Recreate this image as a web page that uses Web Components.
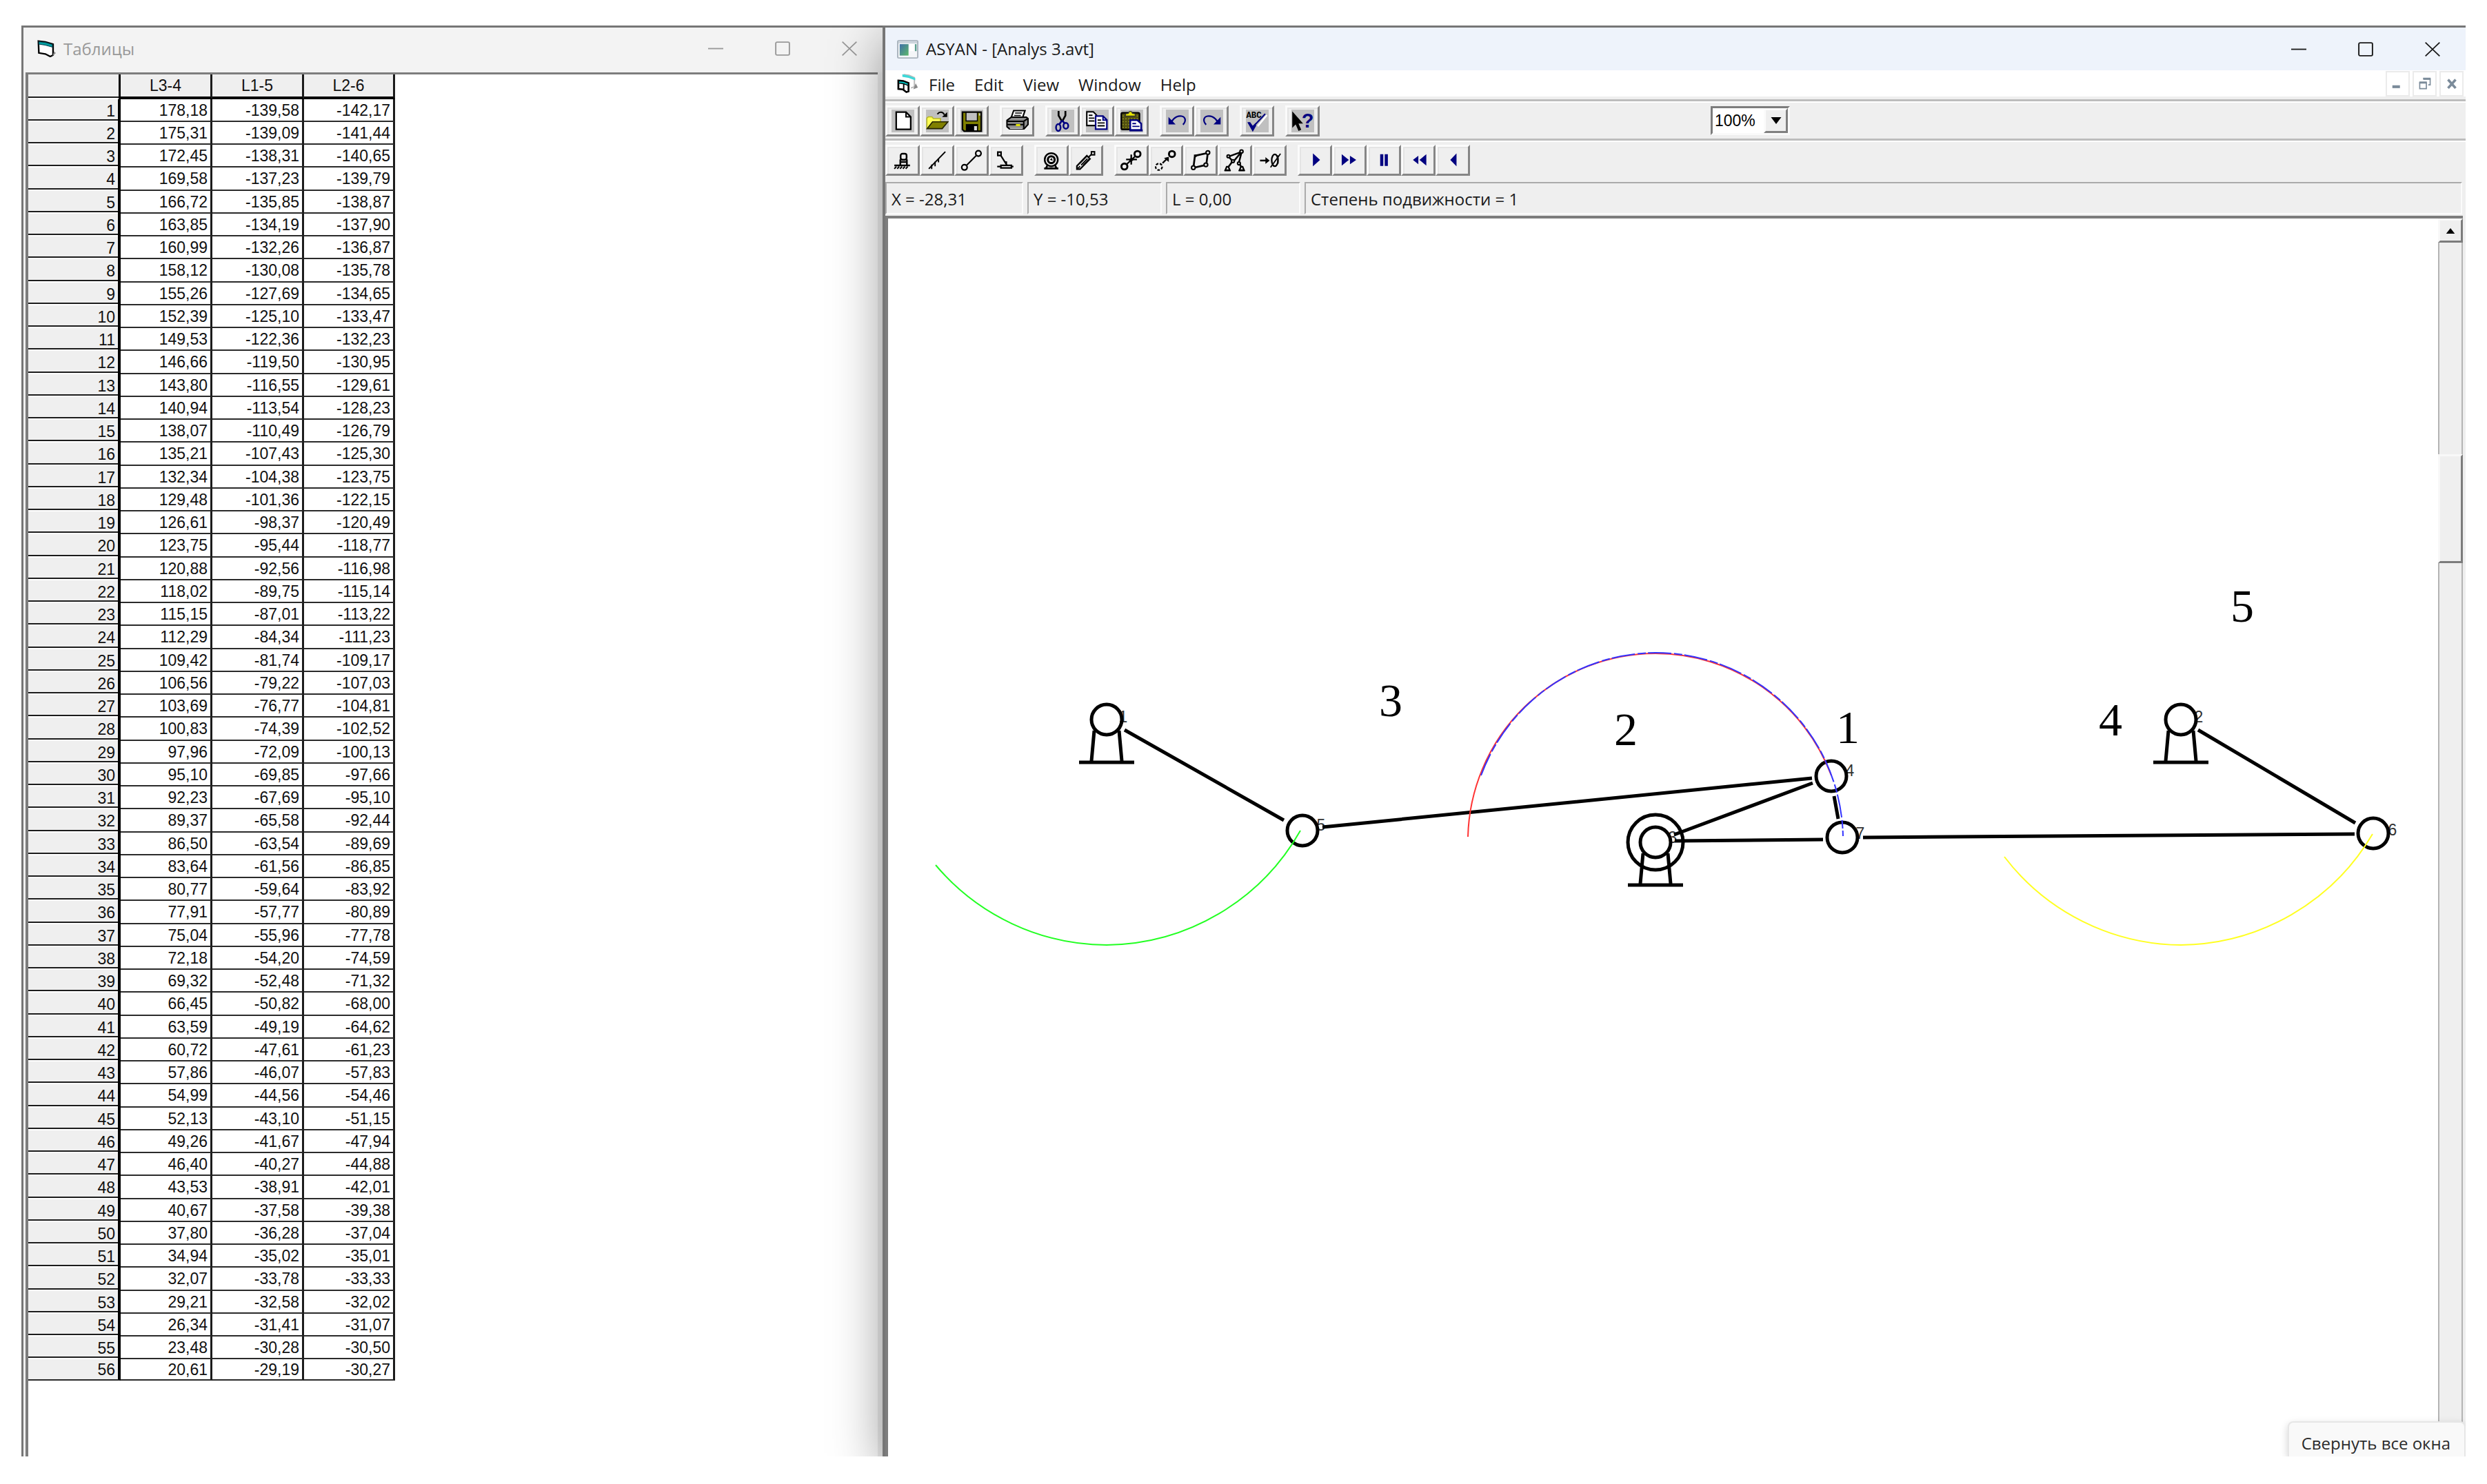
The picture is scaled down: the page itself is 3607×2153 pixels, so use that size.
<!DOCTYPE html>
<html lang="ru">
<head>
<meta charset="utf-8">
<title>ASYAN - [Analys 3.avt]</title>
<style>
  html, body { margin: 0; height: 100%; background: #fff; }
  body { font: 24px/32px "Open Sans", "Noto Sans", sans-serif; color: #1a1a1a; }
</style>
</head>
<body>
<asyan-desktop></asyan-desktop>

<script>
const sheet = `*{box-sizing:border-box} button{font:inherit;color:inherit;margin:0;padding:0;border:0;background:none}`;

function define(name, render) {
  customElements.define(name, class extends HTMLElement {
    connectedCallback() {
      if (this.shadowRoot) return;
      const root = this.attachShadow({ mode: 'open' });
      const t = document.createElement('template');
      t.innerHTML = render(this).replace('<style>', '<style>' + sheet);
      root.appendChild(t.content.cloneNode(true));
    }
  });
}

/* ---------- icon set, drawn on a 16 x 16 grid ---------- */
const K = '#000', N = '#000080', O = '#808000', Y = '#ffff55';
const ground = (x, y) => `<path d="M${x - 1.6} ${y + 2.6}l1-2.4h1.2l1 2.4zM${x - 2.2} ${y + 2.8}h4.4" fill="none" stroke="${K}" stroke-width="1.1"/>`;
const ICONS = {
  'new': `<path d="M3.3 1.8h6.9l3.3 3.3v8.8H3.3z" fill="#fff" stroke="${K}" stroke-width="1.1"/><path d="M10.2 1.8v3.3h3.3" fill="none" stroke="${K}"/>`,
  open: `<path d="M.6 13.4V6l1-.9h2.6l1 1.2h5v2.4" fill="${Y}" stroke="#b5b52a" stroke-width=".8"/><path d="M.8 13.4L4.6 8.6h10.8l-4 4.8z" fill="${O}" stroke="#222200" stroke-width=".8"/><path d="M8 3.2C9.4 1.4 11.6 1.2 13 3.6" fill="none" stroke="${K}"/><path d="M14.9 1.8v3.4h-3.6z"/>`,
  save: `<path d="M1.4 1.8h13.2v13.4H2.6L1.4 14z" fill="${O}" stroke="${K}" stroke-width="1.1"/><path d="M3.9 2h8v6h-8z" fill="#c0c0c0" stroke="${K}" stroke-width=".7"/><path d="M3.8 10.2h8.6v5H3.8z"/><path d="M9.6 11.6h2v3h-2z" fill="#ddd"/><path d="M13 2.6h1v1.6h-1z" fill="#c0c0c0"/>`,
  print: `<path d="M5.4.7h8l-1.8 5.2h-8z" fill="#fff" stroke="${K}"/><path d="M6.4 2.4h4.8M5.8 4.1h4.6" stroke="${K}" stroke-width=".8"/><path d="M.7 7.6l3-2.3h10.6l1.2 1v4.2l-2.8 3H2.4L.7 12z" fill="#8d8d8d" stroke="${K}"/><path d="M.7 8.2h11.8l3-2M12.5 8.2v4.8M1 10.5h11.4" stroke="${K}" fill="none"/><path d="M7 10.2h3v1.4H7z" fill="#e6e600"/><path d="M2.8 13.2h9" stroke="#ddd" stroke-width=".7"/>`,
  cut: `<path d="M5 1v3.2l2.3 4M9.8 1v3.2L7.6 8.2" fill="none" stroke="${K}" stroke-width="1.3"/><path d="M7.4 7.6l-2 3M7.5 7.6l2 2.4" stroke="${N}" stroke-width="1.3"/><ellipse cx="4.8" cy="12.6" rx="1.6" ry="2.4" fill="none" stroke="${N}" stroke-width="1.2"/><ellipse cx="10.1" cy="11.4" rx="1.7" ry="2.1" fill="none" stroke="${N}" stroke-width="1.2"/>`,
  copy: `<path d="M.6 1.6h4.6l2.2 2.2v7.4H.6z" fill="#fff" stroke="${K}"/><path d="M2 4h2.6M2 6h4M2 8h4" stroke="${K}" stroke-width=".9"/><path d="M6.8 4.6h5.2l2.7 2.7v6.5H6.8z" fill="#fff" stroke="${N}" stroke-width="1.1"/><path d="M12 4.8v2.6h2.6" fill="none" stroke="${N}"/><path d="M8.2 7.4h2.4M8.2 9.4h5M8.2 11.4h5" stroke="${K}" stroke-width=".9"/>`,
  paste: `<rect x=".6" y="2.2" width="12.8" height="11.8" rx="1" fill="#504f10" stroke="${K}" stroke-width="1.1"/><path d="M1.4 4.5h11M1.4 6.5h11M1.4 8.5h11M1.4 10.5h11M1.4 12.5h11" stroke="#8a8a20" stroke-width=".8" stroke-dasharray="1 1"/><path d="M3.6 4.6V3l2-.4c.4-1.8 2.4-1.8 2.8 0l2 .4v1.6z" fill="#e8e800" stroke="#333" stroke-width=".6"/><path d="M6.9 7.4h5l2.7 2.4v4.6H6.9z" fill="#fff" stroke="${N}" stroke-width="1.2"/><path d="M8.4 9.8h2.6M8.4 11.8h5" stroke="${N}" stroke-width=".9"/><path d="M6.4 14.6h9.2" stroke="${N}" stroke-width="1.4"/>`,
  undo: `<path d="M1.8 5.2v5.2h5z" fill="${N}"/><path d="M4 8.4C6 5 9 4.2 11 4.6c3 .6 3.3 3.6 1 6" fill="none" stroke="${N}" stroke-width="1.1"/>`,
  redo: `<path d="M14.2 5.2v5.2h-5z" fill="${N}"/><path d="M12 8.4C10 5 7 4.2 5 4.6c-3 .6-3.3 3.6-1 6" fill="none" stroke="${N}" stroke-width="1.1"/>`,
  spell: `<text x=".2" y="6" font-family="Liberation Mono, monospace" font-weight="bold" font-size="6">ABC</text><path d="M14.7 3.9L8.3 11.7" stroke="#fff" stroke-width="1.2"/><path d="M1.8 9.2l3 3.2L13.6 3" fill="none" stroke="${N}" stroke-width="1"/><path d="M1 8.8h2l1.8 2.6L7 9.2l.2 2.2-2.4 4.2z" fill="${N}"/>`,
  help: `<path d="M.6 1.2v11.6l2.4-2.4 2 4.6 1.9-.8-1.9-4.4h3.2z"/><text x="7.2" y="12.6" font-family="Liberation Sans, sans-serif" font-weight="bold" font-size="14" fill="${N}">?</text>`,
  pivot: `<rect x="6.4" y="3.4" width="4.2" height="4.2" rx="1.3" fill="none" stroke="${K}" stroke-width="1.2"/><path d="M6.2 7.4v4.2M10.8 7.4v4.2M6.4 9.2h4.2M2 11.6h11" stroke="${K}" stroke-width="1.2"/><path d="M2 14l1.4-1.6M4 14l1.4-1.6M6 14l1.4-1.6M8 14l1.4-1.6M10 14l1.4-1.6" stroke="${K}"/>`,
  rail: `<path d="M13.6 2L2 14" stroke="${K}" stroke-width="1"/><path d="M4 11v3.2M6.4 9v3.2M8.8 6.8v2.6" stroke="${K}" stroke-width=".9"/>`,
  link: `<circle cx="12.6" cy="3.2" r="1.9" fill="none" stroke="${K}" stroke-width="1.1"/><circle cx="2.8" cy="13" r="1.9" fill="none" stroke="${K}" stroke-width="1.1"/><path d="M11.2 4.6l-7 7" stroke="${K}"/>`,
  slider: `<path d="M2 2.2h2.3v2.5H2zM4.2 11.6h7.4v1.8H4.2zM4.2 4.8l4.2 6.6M1.6 12.4h2.6M11.6 12.4h1.4" fill="none" stroke="${K}" stroke-width="1.1"/><path d="M6 8.6l2.6.2-.2 2.4z"/>`,
  motor: `<circle cx="7.6" cy="7.6" r="4.6" fill="none" stroke="${K}" stroke-width="1.2"/><circle cx="7.6" cy="7.6" r="2.4" fill="none" stroke="${K}" stroke-width="1.5"/><path d="M6.6 7.6l1.4-1.2.6 2z"/><path d="M5 11.4l-1.2 2.4M10.2 11.4l1.2 2.4M2.6 13.8h10" stroke="${K}" stroke-width="1.3"/>`,
  cylinder: `<path d="M1.4 12l7-7.2 2.2 2.2-7 7.2H1.4z" fill="none" stroke="${K}" stroke-width="1.1"/><path d="M4.4 11.4l4.4-4.6M3.6 10l4.8-5M6 11.4l4-4.2M2.2 13.6l1.4-1.4" stroke="${K}" stroke-width=".9"/><path d="M9.4 6l2.4-2.4" stroke="${K}"/><rect x="11.6" y="2" width="2.2" height="2.2" fill="none" stroke="${K}"/>`,
  join: `<circle cx="12" cy="3.6" r="2.1" fill="none" stroke="${K}" stroke-width="1.4"/><circle cx="2.8" cy="12.4" r="2.1" fill="none" stroke="${K}" stroke-width="1.4"/><path d="M4.4 10.8l6-5.6M7.6 4v7M4 7.4h7.6" stroke="${K}" stroke-width="1.1"/><path d="M7.6 6.2l1.8 1.4-1.8 1.6-1.8-1.6z"/>`,
  move: `<circle cx="12" cy="3.6" r="2.1" fill="none" stroke="${K}" stroke-width="1.4"/><circle cx="2.8" cy="12.6" r="2.3" fill="none" stroke="${K}" stroke-width="1.1" stroke-dasharray="1.8 1"/><path d="M5.4 10l3-3" stroke="${K}" stroke-width="1.1"/><path d="M9.8 5.6v3.6L6.4 6.4z"/>`,
  contour: `<path d="M4.2 4.8l8-1.8M12.8 4l-.8 6.4M10.4 11.6l-6 1.4M3 12l.8-6.4" stroke="${K}" stroke-width="1.3"/><path d="M3.2 4h1.8v1.8H3.2z"/><circle cx="13" cy="2.6" r="1.3" fill="#efefef" stroke="${K}"/><circle cx="11.6" cy="11.2" r="1.3" fill="#efefef" stroke="${K}"/><circle cx="2.8" cy="13.2" r="1.3" fill="#efefef" stroke="${K}"/>`,
  assembly: `<path d="M3.4 5.4l8.6-3.2M3.8 6l2.4 2.6L3 13M12 2.6l-5 6M12.4 2.6l-1.8 7L12.4 13" fill="none" stroke="${K}" stroke-width="1.2"/><circle cx="12.4" cy="1.8" r="1.1" fill="#efefef" stroke="${K}"/><circle cx="3.2" cy="5.2" r="1" fill="#efefef" stroke="${K}"/><circle cx="6.4" cy="8.6" r="1" fill="#efefef" stroke="${K}"/><circle cx="10.6" cy="10.2" r="1" fill="#efefef" stroke="${K}"/>${ground(2.6, 12.4)}${ground(12.6, 12.4)}`,
  zero: `<path d="M1.2 8.2h4.6" stroke="${K}" stroke-width="1.2"/><path d="M5 5.8l3 2.4-3 2.4z"/><ellipse cx="11.6" cy="8" rx="2.2" ry="4.2" fill="none" stroke="${K}" stroke-width="1.1"/><path d="M15.6 3.4L8.6 13M13.8 4.6v5.8" stroke="${K}" stroke-width=".9"/>`,
  play: `<path d="M6.4 3.2L11.4 7.7 6.4 12.2z" fill="${N}"/>`,
  forward: `<path d="M2.4 3.8L7.4 7.8 2.4 11.8zM8.2 4.8l4.4 3-4.4 3z" fill="${N}"/>`,
  pause: `<path d="M5.2 3.8h2.2v8.2H5.2zM8.4 3.8h2.2v8.2H8.4z" fill="${N}"/>`,
  rewind: `<path d="M7.8 4.8L4 7.8l3.8 3zM13.4 3.8l-4.8 4 4.8 4z" fill="${N}"/>`,
  back: `<path d="M10.4 3.2L6 7.7l4.4 4.5z" fill="${N}"/>`,
  min: `<path d="M0 8h16" stroke="currentColor" stroke-width="1.4"/>`,
  max: `<rect x=".8" y=".8" width="14.4" height="14.4" rx="1.4" fill="none" stroke="currentColor" stroke-width="1.4"/>`,
  close: `<path d="M.5.5l15 15M15.5.5l-15 15" stroke="currentColor" stroke-width="1.3"/>`,
  mdimin: `<path d="M2 10h8v3H2z" fill="currentColor"/>`,
  mdirestore: `<path d="M6.5 3.5h7v6h-2" fill="none" stroke="currentColor" stroke-width="1.2"/><path d="M6 3h8" stroke="currentColor" stroke-width="2"/><path d="M2.5 7.5h7v6h-7z" fill="none" stroke="currentColor" stroke-width="1.2"/><path d="M2 7h8" stroke="currentColor" stroke-width="2"/>`,
  mdiclose: `<path d="M4 4l8 9M12 4l-8 9" stroke="currentColor" stroke-width="2.6"/>`,
  form: `<path d="M1 1l6 .8 6.6 2V14l-2.4 1.4L7 13l-5.6-1z" fill="#fff" stroke="${K}" stroke-width="1.4"/><path d="M1.4 1.6l6 .8 5.6 1.8v2.4L7 4.8l-5.6-1z" fill="#00a0a0" stroke="#045" stroke-width=".7"/><path d="M14.4 10.6l1.6 1.6-2.8 2.6" fill="#888"/>`,
  forms: `<path d="M5 .6l4 .6 4 2v7.6l-2.6 1" fill="#fff" stroke="#bbb"/><path d="M4 .4l4.6 1 5 2.2v1.8L8.6 3.4 4 2.6z" fill="#3fd8d8"/><path d="M14 8l1.6 3.4-3.4 1.4" fill="#888"/><path d="M1 5.6l3.6.4 4 1.6v7L7 15.2 4.4 13 1 12.6z" fill="#fff" stroke="${K}" stroke-width="1.4"/><path d="M1.2 6l3.8.4 3.4 1.4v2L5 8.4l-3.8-.6z" fill="#00c0c0" stroke="${K}" stroke-width=".7"/><path d="M5 8v5" stroke="${K}"/>`,
  app: `<rect x=".5" y=".5" width="15" height="15" rx="1" fill="#f4f6f8" stroke="#a9b3bd"/><path d="M1 1h14v2H1z" fill="#ccd4dc"/><defs><linearGradient id="g" x1="0" y1="0" x2="1" y2="1"><stop offset="0" stop-color="#3f6fa8"/><stop offset="1" stop-color="#5cb86a"/></linearGradient></defs><path d="M2 3.6h6.6v9.8H2z" fill="url(#g)"/><path d="M9.4 3.6h3.2v6H9.4z" fill="#fff"/><path d="M13.4 3.6h1.2v6h-1.2z" fill="#5b9f8f"/>`,
  up: `<path d="M8 4l5 8H3z"/>`,
  down: `<path d="M2 3h12l-6 10z"/>`
};

define('vb-icon', el => `
  <style>:host{display:block;width:33px;height:33px;flex:none} svg{display:block;width:100%;height:100%}</style>
  <svg viewBox="0 0 16 16" preserveAspectRatio="none" aria-hidden="true">${ICONS[el.getAttribute('name')]}</svg>`);

define('tool-button', el => `
  <style>
    :host{display:block;flex:none}
    button{display:flex;align-items:center;justify-content:center;width:50px;height:45px;background:#efefef;
      border:3px solid;border-color:#fbfbfb #868686 #868686 #fbfbfb;box-shadow:inset 2px 2px #e4e4e4}
    :host([well]) vb-icon{background:#c0c0c0}
  </style>
  <button aria-label="${el.getAttribute('label')}"><vb-icon name="${el.getAttribute('icon')}"></vb-icon></button>`);

define('tool-group', () => `<style>:host{display:flex;flex:none}</style><slot></slot>`);

define('tool-bar', () => `
  <style>:host{display:flex;gap:16px;padding:6px 0 3px;background:#efefef;border-top:3px solid #bdbdbd;box-shadow:inset 0 2px #fff}</style>
  <slot></slot>`);

define('zoom-box', () => `
  <style>
    :host{display:block;margin:1px 0 2px 551px}
    label{display:grid;width:115px;height:42px;background:#fff;border:3px solid;border-color:#7c7c7c #fafafa #fafafa #7c7c7c}
    select,span{grid-area:1/1}
    select{appearance:none;border:0;margin:0;padding:0 0 0 3px;background:none;font:23px/32px "Liberation Sans",sans-serif;color:#000}
    span{justify-self:end;display:flex;align-items:center;justify-content:center;width:35px;background:#efefef;
      border:3px solid;border-color:#fbfbfb #808080 #808080 #fbfbfb;pointer-events:none}
    vb-icon{width:20px;height:16px}
  </style>
  <label><select aria-label="Zoom"><option>100%</option></select><span><vb-icon name="down"></vb-icon></span></label>`);

define('title-bar', el => `
  <style>
    :host{display:flex;align-items:center;flex:none;height:62px;padding-left:17px;background:#eef3fb;color:#1a1a1a}
    :host([inactive]){height:65px;padding:0 0 4px 20px;background:#f3f3f3;color:#999}
    .ico{width:31px;height:27px;margin-right:11px}
    :host([inactive]) .ico{width:27px;height:25px}
    h1{flex:1;margin:0;font-size:24px;line-height:32px;font-weight:400}
    button{display:flex;align-items:center;justify-content:center;width:97px;height:60px}
    button vb-icon{width:22px;height:21px}
  </style>
  <vb-icon class="ico" name="${el.getAttribute('icon')}"></vb-icon>
  <h1><slot></slot></h1>
  <button aria-label="Minimize"><vb-icon name="min"></vb-icon></button>
  <button aria-label="Maximize"><vb-icon name="max"></vb-icon></button>
  <button aria-label="Close"><vb-icon name="close"></vb-icon></button>`);

define('menu-bar', () => `
  <style>
    :host{display:flex;align-items:center;flex:none;height:42px;padding:0 3px 0 17px;background:#fff;border-bottom:4px solid #efefef}
    .doc{width:31px;height:28px}
    nav{display:flex;flex:1;gap:28px;margin-left:15px;padding-top:4px}
    nav button{line-height:32px}
    .mdi{display:flex;gap:4px;color:#7b8b9a}
    .mdi button{display:flex;align-items:center;justify-content:center;width:35px;height:37px;border:2px solid #ebebeb}
    .mdi vb-icon{width:22px;height:22px}
  </style>
  <vb-icon class="doc" name="forms"></vb-icon>
  <nav><button>File</button><button>Edit</button><button>View</button><button>Window</button><button>Help</button></nav>
  <div class="mdi">
    <button aria-label="Minimize document"><vb-icon name="mdimin"></vb-icon></button>
    <button aria-label="Restore document"><vb-icon name="mdirestore"></vb-icon></button>
    <button aria-label="Close document"><vb-icon name="mdiclose"></vb-icon></button>
  </div>`);

define('status-bar', () => `
  <style>
    :host{display:grid;grid-template-columns:200px 195px 195px 1fr;gap:6px;flex:none;padding:6px 5px 2px 0;background:#efefef}
    ::slotted(span){box-sizing:border-box;height:47px;padding-left:7px;line-height:45px;border:2px solid;border-color:#ababab #fbfbfb #fbfbfb #ababab}
  </style><slot></slot>`);

define('scroll-bar', () => `
  <style>
    :host{display:flex;flex-direction:column;flex:none;width:36px}
    button,.thumb{background:#efefef;border:3px solid;border-color:#f8f8f8 #7c7c7c #7c7c7c #f8f8f8}
    button{display:flex;align-items:center;justify-content:center;height:35px}
    vb-icon{width:20px;height:16px}
    .track{flex:1;display:grid;grid-template-rows:307fr 158fr 1296fr}
    .track i{border:solid #b4b4b4;border-width:0 2px}
  </style>
  <button aria-label="Scroll up"><vb-icon name="up"></vb-icon></button>
  <div class="track"><i></i><div class="thumb"></div><i></i></div>`);

/* pinned support: joint circle on a stand */
const support = (x, y) => `<circle cx="${x}" cy="${y}" r="22"/><path d="M${x - 18} ${y + 16}L${x - 22} ${y + 60}M${x + 18} ${y + 16}L${x + 22} ${y + 60}M${x - 40} ${y + 62}h80"/>`;

define('mechanism-view', () => `
  <style>
    :host{display:block;flex:1;min-width:0;background:#fff}
    svg{display:block;width:100%;height:100%}
    .body{fill:none;stroke:#000;stroke-width:5}
    .path{fill:none;stroke-width:2}
    .mark{font:68px "Liberation Serif",serif;text-anchor:middle;fill:#000}
    .id{font:23px "Liberation Sans",sans-serif;text-anchor:middle;fill:#333}
  </style>
  <svg viewBox="1288 317 2248 1796" preserveAspectRatio="xMinYMin meet" role="img" aria-label="Mechanism">
    <g class="id">
      <text x="1629" y="1048">1</text><text x="3189" y="1048">2</text><text x="2426" y="1223">3</text>
      <text x="2683" y="1126">4</text><text x="1916" y="1205">5</text><text x="3470" y="1212">6</text><text x="2698" y="1217">7</text>
    </g>
    <g class="body">
      ${support(1605, 1044)}${support(3163, 1044)}${support(2401, 1222)}
      <circle cx="2401" cy="1222" r="40"/>
      <circle cx="1889" cy="1205" r="22"/><circle cx="2656" cy="1126" r="22"/>
      <circle cx="2672" cy="1215" r="22"/><circle cx="3442" cy="1209" r="22"/>
      <path d="M1631 1059L1862 1190M1918 1200L2628 1129M2428 1211L2629 1136M2429 1220L2644 1218M2660 1155L2666 1188M2702 1215L3415 1210M3188 1059L3416 1194"/>
    </g>
    <g class="path">
      <path d="M1357 1255A326 326 0 0 0 1605 1371A326 326 0 0 0 1886 1205" stroke="#2f2"/>
      <path d="M2907 1243A326 326 0 0 0 3163 1371A326 326 0 0 0 3441 1210" stroke="#ff2"/>
      <path d="M2129 1214A273 273 0 0 1 2401 948A273 273 0 0 1 2656 1125" stroke="#f33"/>
      <path d="M2148 1125A272 272 0 0 1 2401 947A272 272 0 0 1 2673 1213" stroke="#33f" stroke-dasharray="34 4 12 3"/>
    </g>
    <g class="mark">
      <text x="2680" y="1078">1</text><text x="2358" y="1081">2</text><text x="2017" y="1039">3</text>
      <text x="3061" y="1067">4</text><text x="3252" y="902">5</text>
    </g>
  </svg>`);

/* ---------- table of link angles ---------- */
const L34 = '178,18 175,31 172,45 169,58 166,72 163,85 160,99 158,12 155,26 152,39 149,53 146,66 143,80 140,94 138,07 135,21 132,34 129,48 126,61 123,75 120,88 118,02 115,15 112,29 109,42 106,56 103,69 100,83 97,96 95,10 92,23 89,37 86,50 83,64 80,77 77,91 75,04 72,18 69,32 66,45 63,59 60,72 57,86 54,99 52,13 49,26 46,40 43,53 40,67 37,80 34,94 32,07 29,21 26,34 23,48 20,61'.split(' ');
const L15 = '139,58 139,09 138,31 137,23 135,85 134,19 132,26 130,08 127,69 125,10 122,36 119,50 116,55 113,54 110,49 107,43 104,38 101,36 98,37 95,44 92,56 89,75 87,01 84,34 81,74 79,22 76,77 74,39 72,09 69,85 67,69 65,58 63,54 61,56 59,64 57,77 55,96 54,20 52,48 50,82 49,19 47,61 46,07 44,56 43,10 41,67 40,27 38,91 37,58 36,28 35,02 33,78 32,58 31,41 30,28 29,19'.split(' ');
const L26 = '142,17 141,44 140,65 139,79 138,87 137,90 136,87 135,78 134,65 133,47 132,23 130,95 129,61 128,23 126,79 125,30 123,75 122,15 120,49 118,77 116,98 115,14 113,22 111,23 109,17 107,03 104,81 102,52 100,13 97,66 95,10 92,44 89,69 86,85 83,92 80,89 77,78 74,59 71,32 68,00 64,62 61,23 57,83 54,46 51,15 47,94 44,88 42,01 39,38 37,04 35,01 33,33 32,02 31,07 30,50 30,27'.split(' ');

define('data-grid', () => `
  <style>
    :host{display:block}
    table{border-collapse:separate;border-spacing:0;table-layout:fixed;width:532px;color:#111;
      font:23px/28px "Liberation Sans",sans-serif}
    .c0{width:134px}.c1{width:133px}.c3{width:132px}
    tr{height:33px} tr:nth-child(4n){height:34px} tbody tr:last-child{height:31px} thead tr{height:36px}
    th,td{padding:0;font-weight:400;text-align:right;border-right:3px solid #1c1c1c}
    td{padding-right:4px;border-bottom:2px solid #2a2a2a}
    thead th{text-align:center;background:#efefef;border-bottom:4px solid #000}
    tbody th,thead td{padding-right:4px;background:#efefef;border-right:4px solid #000;border-bottom:0;box-shadow:inset 0 -2px #fff,inset 0 -4px #1c1c1c}
    thead td{border-right-width:3px}
    tbody tr:last-child th{border-bottom:2px solid #2a2a2a;box-shadow:none}
  </style>
  <table>
    <colgroup><col class="c0"><col class="c1"><col class="c1"><col class="c3"></colgroup>
    <thead><tr><td></td><th scope="col">L3-4</th><th scope="col">L1-5</th><th scope="col">L2-6</th></tr></thead>
    <tbody>${L34.map((v, i) => `<tr><th scope="row">${i + 1}</th><td>${v}</td><td>-${L15[i]}</td><td>-${L26[i]}</td></tr>`).join('')}</tbody>
  </table>`);

define('tip-box', () => `
  <style>:host{display:block;padding:14px 20px 3px 18px;background:#f9f9f9;border:2px solid #e6e6e6;border-bottom:0;border-radius:8px 8px 0 0;box-shadow:0 4px 12px rgba(0,0,0,.18);color:#2b2b2b;white-space:nowrap}</style>
  <slot></slot>`);

define('tables-window', () => `
  <style>
    :host{display:flex;flex-direction:column;min-width:0;background:#efefef;border:solid #767676;border-width:3px 0 0 3px}
    .client{flex:1;min-height:0;margin:0 7px 0 3px;overflow:hidden;background:#fff;border:solid #7d7d7d;border-width:3px 0 0 4px}
  </style>
  <title-bar icon="form" inactive>Таблицы</title-bar>
  <div class="client"><data-grid></data-grid></div>`);

define('analysis-window', () => {
  const group = (list, well) => `<tool-group>${list.split(' ').map(n => `<tool-button icon="${n}" label="${n}"${well && n !== 'print' ? ' well' : ''}></tool-button>`).join('')}</tool-group>`;
  return `
  <style>
    :host{display:flex;flex-direction:column;position:relative;min-width:0;background:#efefef;border:solid #767676;border-width:3px 0 0 4px;box-shadow:0 20px 70px rgba(0,0,0,.4)}
    .client{display:flex;flex:1;min-height:0;margin-right:4px;border:solid #7d7d7d;border-width:4px 0 0 4px}
  </style>
  <title-bar icon="app">ASYAN - [Analys 3.avt]</title-bar>
  <menu-bar></menu-bar>
  <tool-bar>${['new open save', 'print', 'cut copy paste', 'undo redo', 'spell', 'help'].map(g => group(g, true)).join('')}<zoom-box></zoom-box></tool-bar>
  <tool-bar>${['pivot rail link slider', 'motor cylinder', 'join move contour assembly zero', 'play forward pause rewind back'].map(g => group(g)).join('')}</tool-bar>
  <status-bar><span>X = -28,31</span><span>Y = -10,53</span><span>L = 0,00</span><span>Степень подвижности = 1</span></status-bar>
  <div class="client"><mechanism-view></mechanism-view><scroll-bar></scroll-bar></div>`;
});

define('asyan-desktop', () => `
  <style>
    :host{display:block;box-sizing:border-box;height:100vh;padding:37px 31px 40px}
    main{position:relative;display:grid;grid-template-columns:1249fr 2296fr;grid-template-rows:minmax(0,1fr);height:100%;overflow:hidden}
    tip-box{position:absolute;right:0;bottom:0}
  </style>
  <main><tables-window></tables-window><analysis-window></analysis-window><tip-box role="tooltip">Свернуть все окна</tip-box></main>`);
</script>
</body>
</html>
